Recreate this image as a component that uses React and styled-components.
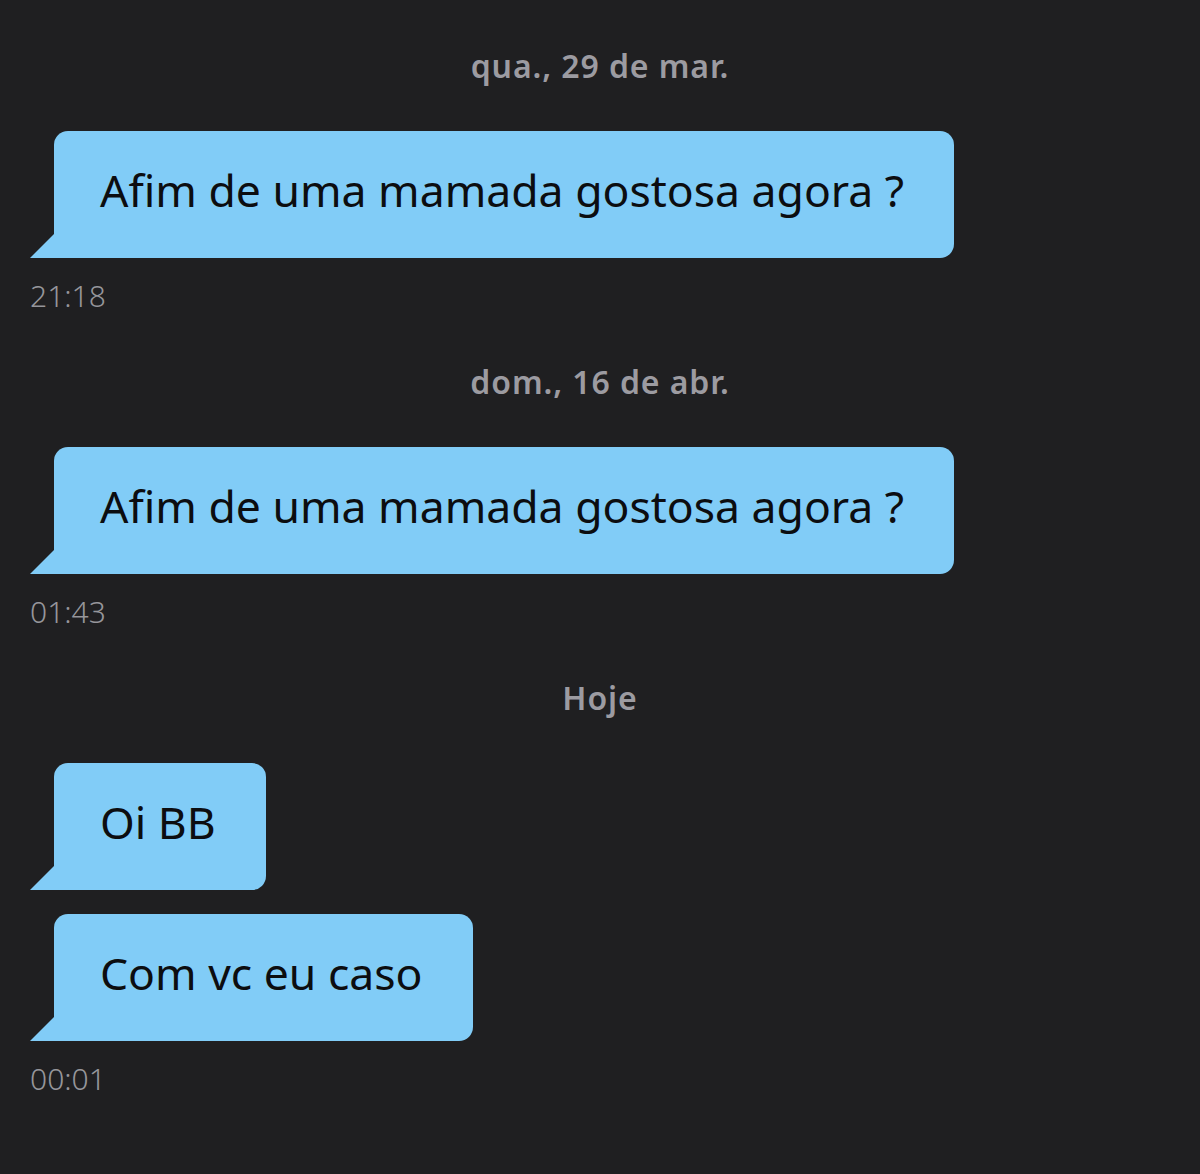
import React from 'react';
import styled, { createGlobalStyle } from 'styled-components';

const GlobalStyle = createGlobalStyle`
  html, body {
    margin: 0;
    padding: 0;
    background: #1f1f21;
  }
  body {
    font-family: "Noto Sans", "Open Sans", sans-serif;
  }
`;

const Thread = styled.main`
  min-height: 1174px;
  box-sizing: border-box;
  padding: 46px 0 40px 30px;
  display: flex;
  flex-direction: column;
`;

const Day = styled.section`
  display: flex;
  flex-direction: column;
  & + & {
    margin-top: 48px;
  }
`;

const DateLabel = styled.div`
  height: 40px;
  line-height: 40px;
  margin-left: -30px;
  text-align: center;
  color: #9c9ba1;
  font-size: 32px;
  font-weight: 600;
  letter-spacing: 0.9px;
  margin-bottom: 45px;
`;

const Stack = styled.div`
  display: flex;
  flex-direction: column;
  align-items: flex-start;
  gap: 24px;
`;

const Bubble = styled.div`
  position: relative;
  margin-left: 24px;
  height: 127px;
  box-sizing: border-box;
  padding: 0 50px 10px 46px;
  display: flex;
  align-items: center;
  background: #81ccf7;
  color: #0c0d10;
  font-size: 44.5px;
  border-radius: 14px 14px 14px 0;
  white-space: nowrap;

  &::before {
    content: '';
    position: absolute;
    left: -24px;
    bottom: 0;
    width: 24px;
    height: 24px;
    background: #81ccf7;
    clip-path: polygon(100% 0, 100% 100%, 0 100%);
  }
`;

const Time = styled.div`
  margin-top: 20px;
  height: 36px;
  line-height: 36px;
  color: #96969b;
  font-size: 30px;
  font-weight: 300;
`;

const days = [
  { label: 'qua., 29 de mar.', messages: ['Afim de uma mamada gostosa agora ?'], time: '21:18' },
  { label: 'dom., 16 de abr.', messages: ['Afim de uma mamada gostosa agora ?'], time: '01:43' },
  { label: 'Hoje', messages: ['Oi BB', 'Com vc eu caso'], time: '00:01' },
];

export default function App() {
  return (
    <>
      <GlobalStyle />
      <Thread>
        {days.map(day => (
          <Day key={day.label}>
            <DateLabel>{day.label}</DateLabel>
            <Stack>
              {day.messages.map(text => (
                <Bubble key={text}>{text}</Bubble>
              ))}
            </Stack>
            <Time>{day.time}</Time>
          </Day>
        ))}
      </Thread>
    </>
  );
}
